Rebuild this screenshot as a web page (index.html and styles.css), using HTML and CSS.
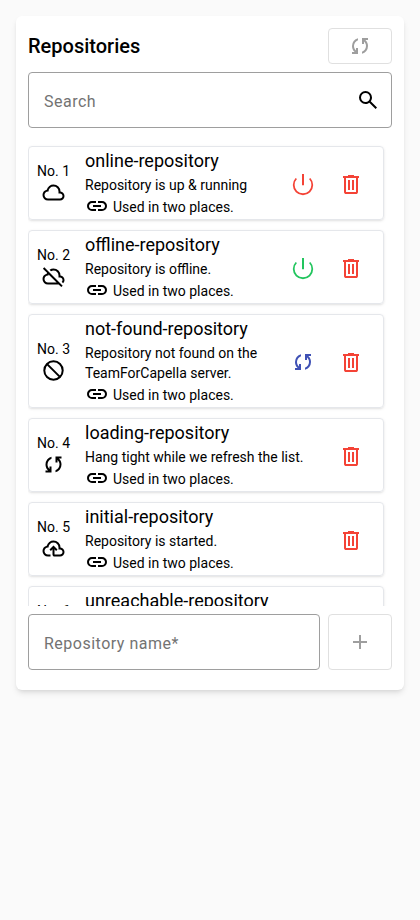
FILE: index.html
```html
<!DOCTYPE html>
<html lang="en">
<head>
<meta charset="utf-8">
<title>Repositories</title>
<link rel="stylesheet" href="styles.css">
</head>
<body>
<svg class="defs" width="0" height="0" aria-hidden="true">
  <symbol id="sync" viewBox="0 -960 960 960"><path d="M160-160v-80h110l-16-14q-52-46-73-105t-21-119q0-111 66.500-197.500T400-790v84q-72 26-116 88.500T240-478q0 45 17 87.500t53 78.500l10 10v-98h80v240H160Zm400-10v-84q72-26 116-88.500T720-482q0-45-17-87.500T650-648l-10-10v98h-80v-240h240v80H690l16 14q49 49 71.500 106.500T800-482q0 111-66.500 197.500T560-170Z"/></symbol>
  <symbol id="search" viewBox="0 -960 960 960"><path d="M784-120 532-372q-30 24-69 38t-83 14q-109 0-184.500-75.500T120-580q0-109 75.500-184.500T380-840q109 0 184.500 75.500T640-580q0 44-14 83t-38 69l252 252-56 56ZM380-400q75 0 127.500-52.500T560-580q0-75-52.500-127.500T380-760q-75 0-127.500 52.500T200-580q0 75 52.500 127.500T380-400Z"/></symbol>
  <symbol id="cloud" viewBox="0 -960 960 960"><path d="M260-160q-91 0-155.500-63T40-377q0-78 47-139t123-78q25-92 100-149t170-57q117 0 198.500 81.500T760-520q69 8 114.500 59.500T920-340q0 75-52.500 127.500T740-160H260Zm0-80h480q42 0 71-29t29-71q0-42-29-71t-71-29h-60v-80q0-83-58.500-141.500T480-720q-83 0-141.500 58.500T280-520h-20q-58 0-99 41t-41 99q0 58 41 99t99 41Z"/></symbol>
  <symbol id="cloud-off" viewBox="0 -960 960 960"><path d="M792-56 686-160H260q-92 0-156-64T40-380q0-77 47.500-137T210-594q3-8 6-15.500t6-16.500L56-792l56-56 736 736-56 56ZM260-240h346L284-562q-2 11-3 21t-1 21h-20q-58 0-99 41t-41 99q0 58 41 99t99 41Zm604 30-58-56q17-14 25.500-32.500T840-340q0-42-29-71t-71-29h-60v-80q0-83-58.500-141.500T480-720q-27 0-52 6.500T380-693l-58-58q35-24 74.500-36.500T480-800q117 0 198.500 81.500T760-520q69 8 114.500 59.500T920-340q0 39-15 72.500T864-210Z"/></symbol>
  <symbol id="cloud-upload" viewBox="0 -960 960 960"><path d="M260-160q-91 0-155.500-63T40-377q0-78 47-139t123-78q25-92 100-149t170-57q117 0 198.500 81.500T760-520q69 8 114.500 59.500T920-340q0 75-52.500 127.500T740-160H520q-33 0-56.500-23.500T440-240v-206l-64 62-56-56 160-160 160 160-56 56-64-62v206h220q42 0 71-29t29-71q0-42-29-71t-71-29h-60v-80q0-83-58.500-141.500T480-720q-83 0-141.500 58.500T280-520h-20q-58 0-99 41t-41 99q0 58 41 99t99 41h100v80H260Z"/></symbol>
  <symbol id="block" viewBox="0 0 24 24"><g fill="none" stroke="currentColor" stroke-width="2"><circle cx="12" cy="12" r="9.200"/><path d="m5.600 5.600 12.800 12.800"/></g></symbol>
  <symbol id="link" viewBox="0 -960 960 960"><path d="M440-280H280q-83 0-141.500-58.500T80-480q0-83 58.500-141.500T280-680h160v80H280q-50 0-85 35t-35 85q0 50 35 85t85 35h160v80ZM320-440v-80h320v80H320Zm200 160v-80h160q50 0 85-35t35-85q0-50-35-85t-85-35H520v-80h160q83 0 141.500 58.500T880-480q0 83-58.500 141.500T680-280H520Z"/></symbol>
  <symbol id="delete" viewBox="0 0 24 24"><path d="M4 4h5V3h6v1h5v2h-1v14q0 .8-.6 1.400T17 22H7q-.8 0-1.400-.6T5 20V6H4ZM7 6v14h10V6ZM9 8h2v10H9Zm4 0h2v10h-2Z"/></symbol>
  <symbol id="power" viewBox="0 0 24 24"><g fill="none" stroke="currentColor" stroke-width="2"><path d="M12 2v11.300"/><path stroke-width="1.800" d="M5.300 6.500a9.300 9.300 0 1 0 13.400 0"/></g></symbol>
  <symbol id="add" viewBox="0 0 24 24"><path d="M11 5h2v6h6v2h-6v6h-2v-6H5v-2h6Z"/></symbol>
</svg>
<main class="panel">
  <header class="header">
    <h1>Repositories</h1>
    <button class="button refresh" disabled aria-label="Refresh"><svg class="icon"><use href="#sync"/></svg></button>
  </header>
  <div class="field search"><span>Search</span><svg class="icon"><use href="#search"/></svg></div>
  <div class="list">
    <article class="item">
      <div class="status"><span>No. 1</span><svg class="icon"><use href="#cloud"/></svg></div>
      <div class="info"><h2>online-repository</h2><p>Repository is up &amp; running</p><div class="usage"><svg class="icon"><use href="#link"/></svg><span>Used in two places.</span></div></div>
      <div class="actions"><svg class="icon red"><use href="#power"/></svg><svg class="icon red"><use href="#delete"/></svg></div>
    </article>
    <article class="item">
      <div class="status"><span>No. 2</span><svg class="icon"><use href="#cloud-off"/></svg></div>
      <div class="info"><h2>offline-repository</h2><p>Repository is offline.</p><div class="usage"><svg class="icon"><use href="#link"/></svg><span>Used in two places.</span></div></div>
      <div class="actions"><svg class="icon green"><use href="#power"/></svg><svg class="icon red"><use href="#delete"/></svg></div>
    </article>
    <article class="item">
      <div class="status"><span>No. 3</span><svg class="icon"><use href="#block"/></svg></div>
      <div class="info"><h2>not-found-repository</h2><p>Repository not found on the TeamForCapella server.</p><div class="usage"><svg class="icon"><use href="#link"/></svg><span>Used in two places.</span></div></div>
      <div class="actions"><svg class="icon blue"><use href="#sync"/></svg><svg class="icon red"><use href="#delete"/></svg></div>
    </article>
    <article class="item">
      <div class="status"><span>No. 4</span><svg class="icon"><use href="#sync"/></svg></div>
      <div class="info"><h2>loading-repository</h2><p>Hang tight while we refresh the list.</p><div class="usage"><svg class="icon"><use href="#link"/></svg><span>Used in two places.</span></div></div>
      <div class="actions"><svg class="icon red"><use href="#delete"/></svg></div>
    </article>
    <article class="item">
      <div class="status"><span>No. 5</span><svg class="icon"><use href="#cloud-upload"/></svg></div>
      <div class="info"><h2>initial-repository</h2><p>Repository is started.</p><div class="usage"><svg class="icon"><use href="#link"/></svg><span>Used in two places.</span></div></div>
      <div class="actions"><svg class="icon red"><use href="#delete"/></svg></div>
    </article>
    <article class="item">
      <div class="status"><span>No. 6</span></div>
      <div class="info"><h2>unreachable-repository</h2></div>
    </article>
  </div>
  <footer class="footer">
    <div class="field name"><span>Repository name*</span></div>
    <button class="button add" disabled aria-label="Add"><svg class="icon"><use href="#add"/></svg></button>
  </footer>
</main>
</body>
</html>
```
FILE: styles.css
```css
* { box-sizing: border-box; }

body {
  margin: 0;
  padding: 16px;
  background: #fafafa;
  color: #000;
  font: 14px/20px Roboto, sans-serif;
}

h1, h2, p { margin: 0; }

.defs { display: block; }

.icon {
  display: block;
  flex: none;
  width: 24px;
  height: 24px;
  fill: currentColor;
}

.panel {
  height: 674px;
  padding: 12px;
  border-radius: 6px;
  background: #fff;
  box-shadow: 0 4px 6px -1px rgb(0 0 0 / 10%), 0 2px 4px -2px rgb(0 0 0 / 10%);
}

.header {
  display: flex;
  justify-content: space-between;
  align-items: center;
  height: 36px;
  margin-bottom: 8px;
}

h1 { font-size: 20px; font-weight: 500; line-height: 32px; }

.button {
  display: flex;
  justify-content: center;
  align-items: center;
  width: 64px;
  padding: 0;
  border: 1px solid #e0e0e0;
  border-radius: 4px;
  background: transparent;
  color: #9e9e9e;
}

.refresh { height: 36px; }
.add { height: 56px; }

.field {
  display: flex;
  align-items: center;
  justify-content: space-between;
  height: 56px;
  padding: 3px 11px 0 15px;
  border: 1px solid #9e9e9e;
  border-radius: 4px;
  color: #737373;
  font-size: 16px;
  letter-spacing: 0.5px;
}

.search .icon { color: #000; margin-top: -3px; }

.list {
  display: flex;
  flex-direction: column;
  gap: 10px;
  height: 478px;
  padding: 18px 8px 0 0;
  margin-bottom: 8px;
  overflow: hidden;
}

.item {
  display: flex;
  align-items: center;
  flex: none;
  min-height: 74px;
  padding-left: 8px;
  border: 1px solid #e5e7eb;
  border-radius: 4px;
  box-shadow: 0 1px 3px rgb(0 0 0 / 10%), 0 1px 2px -1px rgb(0 0 0 / 10%);
}

.status {
  display: flex;
  flex-direction: column;
  align-items: center;
  width: 33px;
  min-height: 44px;
  white-space: nowrap;
}

.status .icon { transform: translate(-0.5px, -0.5px); }

.info {
  flex: 1;
  min-height: 72px;
  margin-left: 15px;
}

h2 {
  font-size: 18px;
  font-weight: 400;
  line-height: 28px;
}

.usage {
  display: flex;
  align-items: center;
  gap: 4px;
  height: 24px;
}

.usage .icon { margin-top: -1.5px; }

.actions {
  display: flex;
  gap: 24px;
  padding: 2px 20px 0 12px;
}

.red { color: #f44336; }
.green { color: #22c55e; }
.blue { color: #3f51b5; }

.footer { display: flex; gap: 8px; }
.name { flex: 1; }
```
